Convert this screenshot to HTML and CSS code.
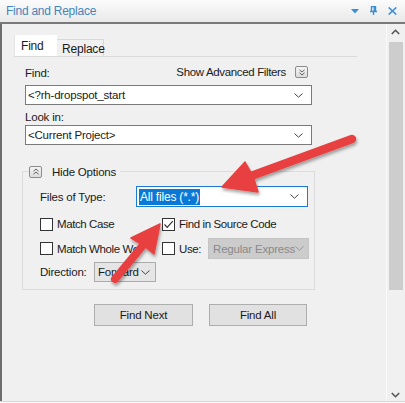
FILE: index.html
```html
<!DOCTYPE html>
<html>
<head>
<meta charset="utf-8">
<link rel="stylesheet" href="styles.css">
</head>
<body>
<div class="window">
  <div class="titlebar">
    <span class="title">Find and Replace</span>
    <div class="title-icons">
      <svg width="8" height="5" viewBox="0 0 8 5"><polygon points="0,0 8,0 4,4.5" fill="#3b8ed0"/></svg>
      <svg width="7" height="9" viewBox="0 0 7 9"><path d="M1.5 0.5h4v5h-4z M0 5.5h7 M3.5 5.5v3.5" fill="none" stroke="#3b8ed0" stroke-width="1.4"/><rect x="3.6" y="1" width="1.4" height="4.5" fill="#3b8ed0"/></svg>
      <svg width="9" height="8" viewBox="0 0 9 8"><path d="M0.7 0.5L8.3 7.5M8.3 0.5L0.7 7.5" stroke="#3b8ed0" stroke-width="1.6"/></svg>
    </div>
  </div>
  <div class="main">
    <div class="panel">
      <div class="tabs">
        <div class="tab active">Find</div>
        <div class="tab">Replace</div>
      </div>
      <div class="form">
        <div class="row-label">
          <span>Find:</span>
          <span class="adv">Show Advanced Filters
            <span class="mini-btn"><svg width="6" height="7" viewBox="0 0 6 7"><path d="M0.5 0.8L3 3L5.5 0.8M0.5 3.8L3 6L5.5 3.8" fill="none" stroke="#555" stroke-width="0.9"/></svg></span>
          </span>
        </div>
        <div class="combo"><span class="combo-text">&lt;?rh-dropspot_start</span><svg class="chev" width="9" height="5" viewBox="0 0 9 5"><path d="M0.5 0.5L4.5 4.2L8.5 0.5" fill="none" stroke="#444" stroke-width="1"/></svg></div>
        <div class="row-label lookin"><span>Look in:</span></div>
        <div class="combo"><span class="combo-text">&lt;Current Project&gt;</span><svg class="chev" width="9" height="5" viewBox="0 0 9 5"><path d="M0.5 0.5L4.5 4.2L8.5 0.5" fill="none" stroke="#444" stroke-width="1"/></svg></div>

        <div class="group">
          <div class="group-head">
            <span class="mini-btn"><svg width="6" height="7" viewBox="0 0 6 7"><path d="M0.5 3.2L3 1L5.5 3.2M0.5 6.2L3 4L5.5 6.2" fill="none" stroke="#555" stroke-width="0.9"/></svg></span>
            <span class="head-text">Hide Options</span>
          </div>
          <div class="grow types">
            <span class="lbl">Files of Type:</span>
            <div class="combo focus"><span class="sel">All files (*.*)</span><svg class="chev" width="9" height="5" viewBox="0 0 9 5"><path d="M0.5 0.5L4.5 4.2L8.5 0.5" fill="none" stroke="#444" stroke-width="1"/></svg></div>
          </div>
          <div class="grow checks1">
            <label class="chk col1"><span class="box"></span><span>Match Case</span></label>
            <label class="chk"><span class="box"><svg width="11" height="11" viewBox="0 0 11 11"><path d="M1.5 5.5L4.2 8.3L9.8 2.2" fill="none" stroke="#333" stroke-width="1.2"/></svg></span>Find in Source Code</label>
          </div>
          <div class="grow checks2">
            <label class="chk col1"><span class="box"></span><span>Match Whole Wo</span></label>
            <label class="chk"><span class="box"></span>Use:</label>
            <div class="disabled-sel"><span class="dis-text">Regular Express</span><svg class="chev" width="9" height="5" viewBox="0 0 9 5"><path d="M0.5 0.5L4.5 4.2L8.5 0.5" fill="none" stroke="#9a9a9a" stroke-width="1"/></svg></div>
          </div>
          <div class="grow dir">
            <span class="lbl dirlbl">Direction:</span>
            <div class="dir-sel">Forward<svg class="chev" width="9" height="5" viewBox="0 0 9 5"><path d="M0.5 0.5L4.5 4.2L8.5 0.5" fill="none" stroke="#444" stroke-width="1"/></svg></div>
          </div>
        </div>

        <div class="buttons">
          <div class="btn next">Find Next</div>
          <div class="btn all">Find All</div>
        </div>
      </div>
    </div>
    <div class="scrollbar">
      <svg class="sb-arrow" width="9" height="6" viewBox="0 0 9 6"><path d="M0.8 5L4.5 1.3L8.2 5" fill="none" stroke="#555" stroke-width="1.6"/></svg>
      <div class="thumb"></div>
      <div class="track"></div>
      <svg class="sb-arrow" width="9" height="6" viewBox="0 0 9 6"><path d="M0.8 1L4.5 4.7L8.2 1" fill="none" stroke="#555" stroke-width="1.6"/></svg>
    </div>
  </div>
  <div class="bottom-edge"></div>

  <svg class="arrows" width="405" height="403" viewBox="0 0 405 403">
    <defs>
      <filter id="sh" x="-20%" y="-20%" width="140%" height="140%">
        <feDropShadow dx="1" dy="2.5" stdDeviation="1.8" flood-color="#000" flood-opacity="0.35"/>
      </filter>
    </defs>
    <g filter="url(#sh)" fill="#e8413f" stroke="#e8413f">
      <line x1="352" y1="139" x2="251" y2="176" stroke-width="8.5" stroke-linecap="round"/>
      <polygon points="222,187 245,162 253,176 258,192" stroke-width="1.5" stroke-linejoin="round"/>
      <line x1="115" y1="279" x2="144" y2="244" stroke-width="8" stroke-linecap="round"/>
      <polygon points="160,224 131,238 143,245 154,254" stroke-width="1.5" stroke-linejoin="round"/>
    </g>
  </svg>
</div>
</body>
</html>
```

FILE: styles.css
```css
* { box-sizing: border-box; }
html, body { margin: 0; padding: 0; }
body {
  font-family: "Liberation Sans", Arial, sans-serif;
  font-size: 11px;
  letter-spacing: -0.2px;
  color: #1a1a1a;
  background: #f0f0f0;
}
.window {
  position: relative;
  width: 405px;
  height: 403px;
  display: flex;
  flex-direction: column;
  overflow: hidden;
  background: #f0f0f0;
}
.titlebar {
  height: 24px;
  flex: none;
  display: flex;
  align-items: center;
  justify-content: space-between;
  padding: 0 8px 1px 6px;
  background: linear-gradient(#fbfbfb, #e9e9e9);
  border-bottom: 2px solid #7a7a7a;
}
.title {
  font-size: 12px;
  letter-spacing: -0.25px;
  color: #4585bb;
}
.title-icons {
  display: flex;
  align-items: center;
  gap: 11px;
}
.title-icons svg:first-child { margin-top: 2px; }
.main {
  flex: 1;
  display: flex;
  min-height: 0;
}
.panel {
  flex: 1;
  border-left: 2px solid #6e6e6e;
  padding: 12px 0 0 12px;
}
.tabs {
  display: flex;
  align-items: flex-end;
  width: 343px;
  height: 21px;
  border-bottom: 1px solid #dadada;
}
.tab {
  height: 17px;
  padding: 2px 0 0 5px;
  width: 47px;
  border: 1px solid #d9d9d9;
  border-bottom: none;
  border-left: none;
  font-size: 12px;
}
.tab.active {
  width: 43px;
  height: 21px;
  background: #fff;
  border: none;
  border-left: 1px solid #e3e3e3;
  padding: 4px 0 0 6px;
}
.form {
  width: 298px;
  padding-left: 11px;
}
.row-label {
  display: flex;
  align-items: center;
  justify-content: space-between;
  height: 16px;
  margin-top: 8px;
  width: 287px;
  font-size: 11.5px;
}
.row-label.lookin { margin-top: 4px; }
.adv {
  display: flex;
  align-items: center;
  gap: 9px;
  margin-right: 4px;
  margin-top: -2px;
  letter-spacing: -0.35px;
}
.mini-btn {
  width: 13px;
  height: 12px;
  border: 1px solid #8c8c8c;
  border-radius: 2px;
  background: linear-gradient(#f4f4f4, #dcdcdc);
  display: inline-flex;
  align-items: center;
  justify-content: center;
}
.combo {
  width: 287px;
  height: 20px;
  margin-top: 4px;
  background: #fff;
  border: 1px solid #7a7a7a;
  display: flex;
  align-items: center;
  justify-content: space-between;
  padding: 0 8px 0 2px;
  font-size: 11.5px;
}
.row-label.lookin + .combo { margin-top: 0; }
.chev { flex: none; }
.group {
  margin-top: 26px;
  margin-left: -3px;
  width: 293px;
  border: 1px solid #dcdcdc;
  padding: 0 0 7px 17px;
}
.group-head {
  display: inline-flex;
  align-items: center;
  gap: 10px;
  margin: -7px 0 0 -11px;
  padding: 0 4px 0 0;
  height: 13px;
  background: #f0f0f0;
  font-size: 11.5px;
  vertical-align: top;
}
.grow {
  display: flex;
  align-items: center;
}
.types {
  margin-top: 2px;
  height: 21px;
}
.lbl { font-size: 11.5px; }
.types .lbl { width: 96px; }
.combo.focus {
  width: 172px;
  height: 21px;
  margin-top: 0;
  border-color: #1a7ad6;
  padding: 0 8px 0 2px;
}
.sel {
  background: #0a78d7;
  color: #fff;
  padding: 1px 1px;
  font-size: 12px;
}
.checks1 { margin-top: 9px; height: 16px; }
.checks2 { margin-top: 6px; height: 21px; }
.chk {
  display: flex;
  align-items: center;
  gap: 4px;
  font-size: 11.5px;
  letter-spacing: -0.4px;
  white-space: nowrap;
}
.col1 { width: 122px; }
.box {
  width: 13px;
  height: 13px;
  flex: none;
  background: #fff;
  border: 1px solid #333;
  display: flex;
  align-items: center;
  justify-content: center;
}
.disabled-sel {
  margin-left: 7px;
  width: 101px;
  height: 21px;
  background: #cccccc;
  border: 1px solid #c4c4c4;
  color: #8a8a8a;
  display: flex;
  align-items: center;
  justify-content: space-between;
  padding: 0 5px 0 4px;
  font-size: 11.5px;
}
.dis-text { white-space: nowrap; }
.dir { margin-top: 3px; height: 20px; }
.dirlbl { width: 54px; }
.dir-sel {
  width: 62px;
  height: 20px;
  background: #e5e5e5;
  border: 1px solid #acacac;
  display: flex;
  align-items: center;
  justify-content: space-between;
  padding: 0 5px 0 3px;
  font-size: 11.5px;
}
.buttons {
  display: flex;
  gap: 16px;
  margin-top: 14px;
  margin-left: 69px;
}
.btn {
  height: 22px;
  background: #e1e1e1;
  border: 1px solid #adadad;
  display: flex;
  align-items: center;
  justify-content: center;
  font-size: 11.5px;
}
.btn.next { width: 99px; }
.btn.all { width: 98px; }
.scrollbar {
  width: 19px;
  flex: none;
  border-left: 1px solid #fafafa;
  background: #f0f0f0;
  display: flex;
  flex-direction: column;
  align-items: center;
  padding: 5px 2px 3px 1px;
}
.sb-arrow { flex: none; }
.thumb {
  margin-top: 7px;
  width: 14px;
  height: 248px;
  background: #cdcdcd;
}
.track { flex: 1; }
.bottom-edge {
  height: 2px;
  flex: none;
  border-top: 1px solid #d8d8d8;
  background: #fafafa;
}
.arrows {
  position: absolute;
  left: 0;
  top: 0;
  pointer-events: none;
}
```
